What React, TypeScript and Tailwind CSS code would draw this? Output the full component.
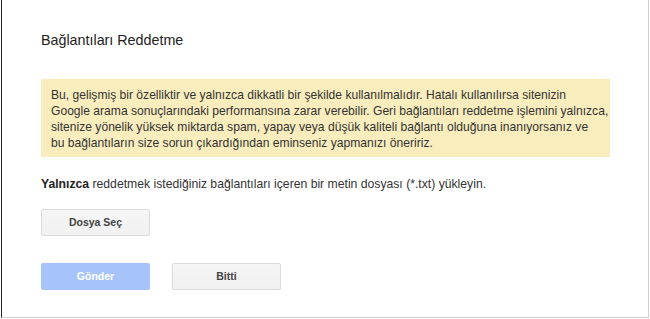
import React from "react";

export default function App() {
  return (
    <div className="w-[650px] h-[319px] bg-white" style={{ fontFamily: '"Liberation Sans", Arial, sans-serif' }}>
      <div className="ml-[1px] w-[648px] h-[318px] border-l-[1.5px] border-l-[#222] border-r border-r-[#cfcfcf] border-b border-b-[#cfcfcf] pl-[39px]">
        <div className="pt-[30px] text-[14.3px] leading-[20px] text-[#222]">Bağlantıları Reddetme</div>
        <div className="mt-[29px] w-[569px] bg-[#f9edbe] pl-[10px] pt-[8px] pb-[6px] text-[12.1px] leading-[16px] text-[#333] whitespace-nowrap">
          Bu, gelişmiş bir özelliktir ve yalnızca dikkatli bir şekilde kullanılmalıdır. Hatalı kullanılırsa sitenizin
          <br />
          Google arama sonuçlarındaki performansına zarar verebilir. Geri bağlantıları reddetme işlemini yalnızca,
          <br />
          sitenize yönelik yüksek miktarda spam, yapay veya düşük kaliteli bağlantı olduğuna inanıyorsanız ve
          <br />
          bu bağlantıların size sorun çıkardığından eminseniz yapmanızı öneririz.
        </div>
        <div className="mt-[19px] text-[12.2px] leading-[16px] text-[#333]">
          <span className="font-bold text-[#222]">Yalnızca</span> reddetmek istediğiniz bağlantıları içeren bir metin dosyası (*.txt) yükleyin.
        </div>
        <button className="mt-[17px] w-[109px] h-[27px] rounded-[2px] border border-[#dcdcdc] bg-gradient-to-b from-[#f5f5f5] to-[#f1f1f1] text-[10.5px] font-bold text-[#444] flex items-center justify-center">
          Dosya Seç
        </button>
        <div className="mt-[27px] flex gap-[22px]">
          <button className="w-[109px] h-[27px] rounded-[2px] border border-[#a6c4f9] bg-[#a6c4fa] text-[10.5px] font-bold text-white flex items-center justify-center">
            Gönder
          </button>
          <button className="w-[109px] h-[27px] rounded-[2px] border border-[#dcdcdc] bg-gradient-to-b from-[#f5f5f5] to-[#f1f1f1] text-[10.5px] font-bold text-[#444] flex items-center justify-center">
            Bitti
          </button>
        </div>
      </div>
    </div>
  );
}
